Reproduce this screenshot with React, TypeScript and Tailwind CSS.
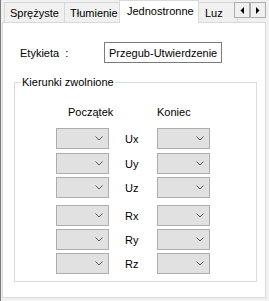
import React from "react";

const Chevron = () => (
  <svg width="8" height="5" viewBox="0 0 8 5" className="block">
    <polyline points="0.5,0.5 4,4 7.5,0.5" fill="none" stroke="#5a5a5a" strokeWidth="1" />
  </svg>
);

const Combo = () => (
  <div className="w-[53px] h-[21px] bg-[#e1e1e1] border border-[#adadad] flex items-center justify-end pr-[5px]">
    <Chevron />
  </div>
);

const Row = ({ label, mt }: { label: string; mt: string }) => (
  <div className={`flex items-center h-[21px] ${mt}`}>
    <Combo />
    <div className="w-[48px] pl-[16px] text-[11px] leading-[16px]">{label}</div>
    <Combo />
  </div>
);

export default function App() {
  return (
    <div
      className="w-[269px] h-[301px] bg-[#f0f0f0] border-l border-[#7a7a7a] text-black overflow-hidden"
      style={{ fontFamily: '"Liberation Sans", Arial, sans-serif' }}
    >
      {/* tab strip */}
      <div className="relative h-[22px] flex items-end pl-[3px] text-[11px] leading-[16px]">
        <div className="h-[20px] w-[61px] border border-b-0 border-[#d9d9d9] bg-[#f0f0f0] flex items-center pl-[5px]">
          Sprężyste
        </div>
        <div className="h-[20px] w-[56px] -ml-px border border-b-0 border-[#d9d9d9] bg-[#f0f0f0] flex items-center pl-[5px]">
          Tłumienie
        </div>
        <div className="relative z-10 h-[23px] w-[80px] -ml-px -mb-px border border-b-0 border-[#d9d9d9] bg-white flex items-center pl-[7px] pb-[2px]">
          Jednostronne
        </div>
        <div className="h-[20px] w-[40px] -ml-px border border-b-0 border-[#d9d9d9] bg-[#f0f0f0] flex items-center pl-[6px]">
          Luz
        </div>
        <div className="absolute left-[233px] top-[2px] flex">
          <div className="w-[16px] h-[16px] border border-[#adadad] bg-[#f0f0f0] flex items-center justify-center">
            <svg width="4" height="7" viewBox="0 0 4 7"><polygon points="4,0 4,7 0.5,3.5" fill="#000" /></svg>
          </div>
          <div className="w-[16px] h-[16px] border border-[#adadad] bg-[#f0f0f0] flex items-center justify-center">
            <svg width="4" height="7" viewBox="0 0 4 7"><polygon points="0,0 0,7 3.5,3.5" fill="#000" /></svg>
          </div>
        </div>
      </div>

      {/* panel */}
      <div className="ml-[1px] w-[264px] h-[276px] border border-[#d9d9d9] bg-white text-[11px] leading-[16px]">
        <div className="flex items-center mt-[19px] h-[21px]">
          <div className="ml-[17px] w-[84px]">Etykieta&nbsp;&nbsp;:</div>
          <div className="w-[118px] h-[21px] border border-[#7a7a7a] flex items-center pl-[4px] whitespace-nowrap">
            Przegub-Utwierdzenie
          </div>
        </div>

        <fieldset className="ml-[11px] mt-[11px] w-[243px] h-[208px] border border-[#dcdcdc] pl-[6px]">
          <legend className="px-[1px] leading-[16px]">Kierunki zwolnione</legend>
          <div className="pl-[35px]">
            <div className="flex h-[16px] mt-[14px]">
              <div className="ml-[12px] w-[89px]">Początek</div>
              <div>Koniec</div>
            </div>
            <div className="mt-[8px]">
              <Row label="Ux" mt="" />
              <Row label="Uy" mt="mt-[4px]" />
              <Row label="Uz" mt="mt-[3px]" />
              <Row label="Rx" mt="mt-[7px]" />
              <Row label="Ry" mt="mt-[3px]" />
              <Row label="Rz" mt="mt-[3px]" />
            </div>
          </div>
        </fieldset>
      </div>
    </div>
  );
}
